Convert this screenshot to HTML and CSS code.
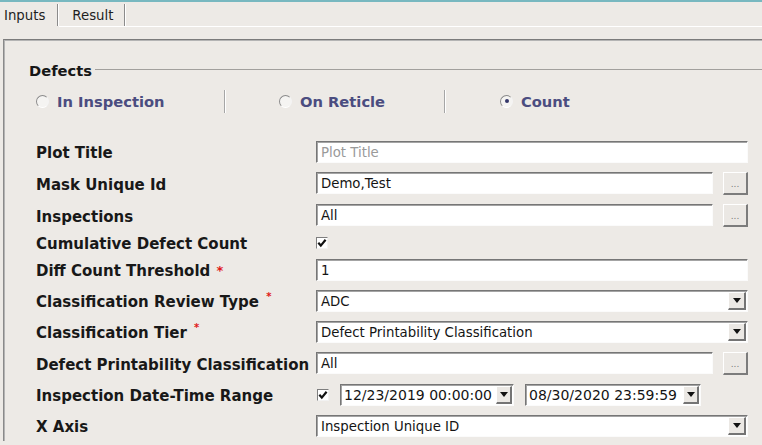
FILE: index.html
```html
<!DOCTYPE html>
<html>
<head>
<meta charset="utf-8">
<link rel="stylesheet" href="styles.css">
</head>
<body>
<div class="topline"></div>
<div class="tabs">
  <div class="tab tab-inputs">Inputs</div><span class="tab-sep"></span>
  <div class="tab tab-result">Result</div><span class="tab-sep"></span>
</div>
<div class="tabs-rule"></div>
<div class="panel">
  <div class="group-head"><span class="group-title">Defects</span><span class="group-line"></span></div>
  <div class="radios">
    <div class="radio r1"><span class="radio-dot"></span>In Inspection</div>
    <span class="vsep"></span>
    <div class="radio r2"><span class="radio-dot"></span>On Reticle</div>
    <span class="vsep"></span>
    <div class="radio r3"><span class="radio-dot checked"></span>Count</div>
  </div>
  <div class="form">
    <div class="label">Plot Title</div>
    <div class="field"><div class="input placeholder">Plot Title</div></div>

    <div class="label">Mask Unique Id</div>
    <div class="field with-btn"><div class="input">Demo,Test</div><div class="dots-btn">...</div></div>

    <div class="label">Inspections</div>
    <div class="field with-btn"><div class="input">All</div><div class="dots-btn">...</div></div>

    <div class="label">Cumulative Defect Count</div>
    <div class="field"><span class="check"><svg width="10" height="10" viewBox="0 0 10 10"><path d="M1.3 4.8 L3.8 7.6 L8.6 1.8" fill="none" stroke="#111" stroke-width="2.2"/></svg></span></div>

    <div class="label">Diff Count Threshold <span class="req">*</span></div>
    <div class="field"><div class="input">1</div></div>

    <div class="label">Classification Review Type <span class="req-sup">*</span></div>
    <div class="field"><div class="input select"><span>ADC</span><span class="arrow"><span class="tri"></span></span></div></div>

    <div class="label">Classification Tier <span class="req-sup">*</span></div>
    <div class="field"><div class="input select"><span>Defect Printability Classification</span><span class="arrow"><span class="tri"></span></span></div></div>

    <div class="label">Defect Printability Classification</div>
    <div class="field with-btn"><div class="input">All</div><div class="dots-btn">...</div></div>

    <div class="label">Inspection Date-Time Range</div>
    <div class="field date-row">
      <span class="check"><svg width="10" height="10" viewBox="0 0 10 10"><path d="M1.3 4.8 L3.8 7.6 L8.6 1.8" fill="none" stroke="#111" stroke-width="2.2"/></svg></span>
      <div class="input select date d1"><span>12/23/2019 00:00:00</span><span class="arrow small"><span class="tri"></span></span></div>
      <div class="input select date d2"><span>08/30/2020 23:59:59</span><span class="arrow small"><span class="tri"></span></span></div>
    </div>

    <div class="label">X Axis</div>
    <div class="field"><div class="input select"><span>Inspection Unique ID</span><span class="arrow"><span class="tri"></span></span></div></div>
  </div>
</div>
</body>
</html>
```

FILE: styles.css
```css
html, body {
  margin: 0;
  padding: 0;
}
body {
  width: 762px;
  height: 445px;
  overflow: hidden;
  background: #edeae6;
  font-family: "DejaVu Sans", sans-serif;
  color: #1b1b1b;
}
.topline {
  height: 2px;
  background: #78b8c0;
}
.tabs {
  display: flex;
  height: 24px;
  align-items: center;
  font-size: 13.3px;
  color: #1e1e1e;
}
.tab {
  padding-top: 2px;
}
.tab-inputs {
  padding-left: 4px;
  padding-right: 12px;
}
.tab-result {
  padding-left: 14px;
  padding-right: 11px;
}
.tab-sep {
  align-self: flex-end;
  width: 1px;
  height: 22px;
  background: #8b8b8b;
  box-shadow: 1px 0 0 #ffffff;
}
.tabs-rule {
  height: 1px;
  margin-left: 59px;
  background: #ffffff;
}
.panel {
  margin: 12px 0 0 3px;
  border-top: 1px solid #7b7b7b;
  border-left: 1px solid #8a8a8a;
  box-shadow: inset 1px 1px 0 #b4b4b4;
  padding: 21px 0 0 25px;
  height: 380px;
}
.group-head {
  display: flex;
  align-items: center;
  height: 18px;
}
.group-title {
  font-weight: bold;
  font-size: 14.7px;
  color: #161616;
}
.group-line {
  flex: 1;
  height: 1px;
  margin-left: 3px;
  margin-top: -1px;
  background: #a2a09d;
}
.radios {
  display: flex;
  align-items: center;
  height: 24px;
  margin: 10px 0 0 7px;
}
.radio {
  display: flex;
  align-items: center;
  font-weight: bold;
  font-size: 14.7px;
  color: #4b4d80;
  box-sizing: border-box;
  height: 24px;
}
.r1 { width: 188px; }
.r2 { width: 218px; padding-left: 53px; }
.r3 { padding-left: 54px; }
.radio-dot {
  box-sizing: border-box;
  width: 13px;
  height: 13px;
  border-radius: 50%;
  border: 1px solid;
  border-color: #8a8a8a #f4f4f4 #ffffff #8a8a8a;
  background: #f5f4f2;
  margin-right: 8px;
  display: flex;
  align-items: center;
  justify-content: center;
}
.radio-dot.checked::after {
  content: "";
  width: 4px;
  height: 4px;
  border-radius: 50%;
  background: #35376a;
}
.vsep {
  width: 1px;
  height: 23px;
  background: #a6a6a6;
  box-shadow: 1px 0 0 #ffffff;
  margin-right: 1px;
}
.form {
  display: grid;
  grid-template-columns: 280px 432px;
  row-gap: 9px;
  align-items: center;
  margin: 28px 0 0 7px;
}
.label {
  font-weight: bold;
  font-size: 15px;
  line-height: 16px;
  height: 14px;
  color: #181818;
  white-space: nowrap;
}
.req {
  color: #e01818;
  font-size: 13px;
  line-height: 0;
  vertical-align: 1px;
  margin-left: 1px;
}
.req-sup {
  color: #e01818;
  font-size: 10px;
  line-height: 0;
  vertical-align: 7px;
  margin-left: 2px;
}
.field {
  display: flex;
  align-items: flex-start;
}
.with-btn {
  gap: 10px;
}
.input {
  box-sizing: border-box;
  flex: 1;
  height: 22px;
  background: #ffffff;
  border-style: solid;
  border-width: 1px;
  border-color: #767676 #fbfbfb #fbfbfb #767676;
  box-shadow: inset 1px 1px 0 #a4a4a4;
  font-size: 13.3px;
  color: #141414;
  padding: 0 3px 0 4px;
  display: flex;
  align-items: center;
  white-space: nowrap;
  overflow: hidden;
}
.placeholder {
  color: #9a9a9a;
}
.select {
  justify-content: space-between;
  padding-right: 1px;
}
.dots-btn {
  box-sizing: border-box;
  width: 25px;
  height: 23px;
  background: #ebe8e4;
  border-style: solid;
  border-width: 1px 2px 2px 1px;
  border-color: #ffffff #7c7c7c #7c7c7c #ffffff;
  font-size: 9px;
  line-height: 9px;
  color: #7a7a7a;
  display: flex;
  align-items: flex-end;
  justify-content: center;
  padding-bottom: 4px;
}
.arrow {
  box-sizing: border-box;
  width: 18px;
  height: 18px;
  background: #ebe8e4;
  border-style: solid;
  border-width: 1px 2px 2px 1px;
  border-color: #ffffff #747474 #747474 #ffffff;
  display: flex;
  align-items: center;
  justify-content: center;
  flex: none;
}
.arrow.small {
  width: 16px;
}
.tri {
  width: 0;
  height: 0;
  border-left: 4px solid transparent;
  border-right: 4px solid transparent;
  border-top: 5px solid #111111;
}
.check {
  box-sizing: border-box;
  width: 12px;
  height: 12px;
  background: #ffffff;
  border: 1px solid;
  border-color: #7e7e7e #f2f2f2 #f2f2f2 #7e7e7e;
  display: flex;
  align-items: center;
  justify-content: center;
  flex: none;
}
.date-row {
  align-items: center;
}
.date-row .check {
  margin: 0 11px 0 1px;
}
.date {
  flex: none;
  font-size: 14px;
  padding-left: 3px;
}
.d1 { width: 174px; margin-right: 11px; }
.d2 { width: 176px; }
```
